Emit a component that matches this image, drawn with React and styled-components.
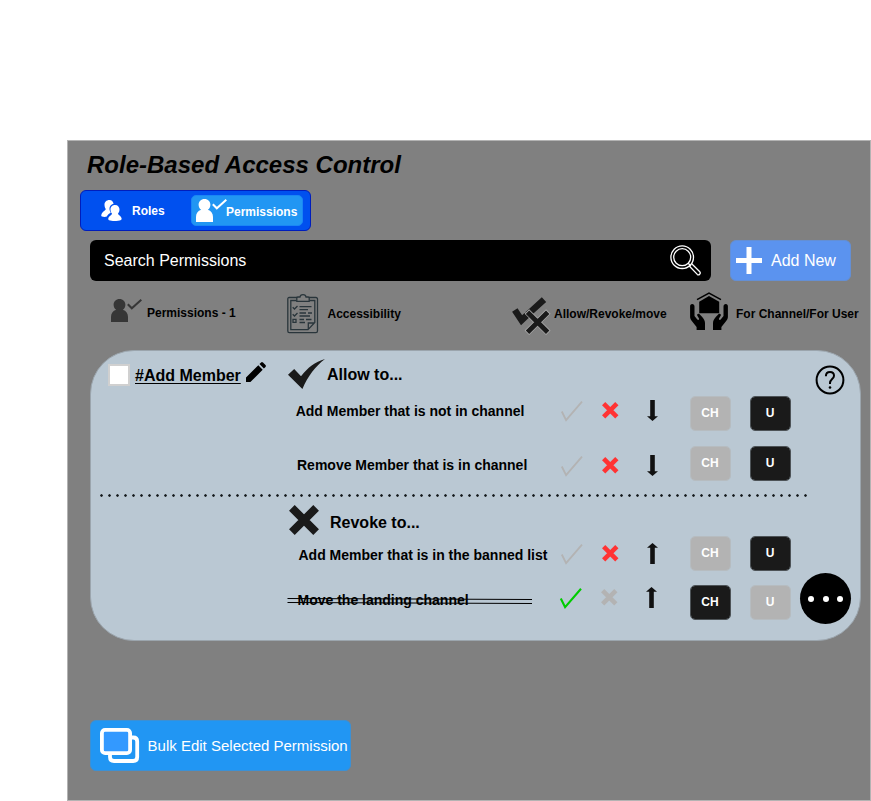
import React from "react";
import styled, { createGlobalStyle } from "styled-components";

const GlobalStyle = createGlobalStyle`
  * { box-sizing: border-box; }
  body { margin: 0; background: #fff; overflow: hidden; }
  svg { display: block; flex: none; overflow: visible; }
`;

const Page = styled.div`
  width: 871px;
  height: 801px;
  padding: 140px 0 0 67px;
  font-family: "Liberation Sans", Arial, sans-serif;
  color: #000;
`;

const Panel = styled.main`
  width: 804px;
  height: 661px;
  background: #808080;
  border: 1px solid #b3b3b3;
  display: flex;
  flex-direction: column;
`;

const Title = styled.h1`
  margin: 10px 0 0 19px;
  height: 39px;
  font-size: 24px;
  line-height: 27px;
  font-weight: bold;
  font-style: italic;
  white-space: nowrap;
`;

const Tabs = styled.nav`
  display: flex;
  margin-left: 12px;
  width: 231px;
  height: 41px;
  background: #0050ef;
  border: 1px solid #001dbc;
  border-radius: 6px;
`;

const Tab = styled.button`
  display: flex;
  align-items: flex-start;
  border: ${(p) => (p.$active ? "1px solid #1a86f5" : "0")};
  border-radius: 5px;
  padding: 0;
  margin: ${(p) => (p.$active ? "4px 0 0" : "4px 0 0 20px")};
  width: ${(p) => (p.$active ? 112 : 90)}px;
  height: 31px;
  background: ${(p) => (p.$active ? "#2196f3" : "transparent")};
  color: #fff;
  font: bold 12px/16px "Liberation Sans", Arial, sans-serif;
  & > svg { margin: ${(p) => (p.$active ? "3px 0 0 4px" : "5px 0 0")}; }
  & > span { margin: ${(p) => (p.$active ? "8px 0 0 -1px" : "8px 0 0 10px")}; }
`;

const Toolbar = styled.div`
  display: flex;
  justify-content: space-between;
  width: 761px;
  margin: 9px 0 0 22px;
`;

const SearchField = styled.div`
  display: flex;
  align-items: center;
  justify-content: space-between;
  width: 621px;
  height: 41px;
  padding: 0 10px 0 14px;
  background: #000;
  border-radius: 6px;
  color: #fff;
  font-size: 16px;
`;

const AddButton = styled.button`
  display: flex;
  align-items: center;
  width: 121px;
  height: 41px;
  padding: 0 0 0 5px;
  gap: 9px;
  border: 1px solid #648fd4;
  border-radius: 6px;
  background: #5b93ef;
  color: #fff;
  font: 16px "Liberation Sans", Arial, sans-serif;
`;

const ColumnHeads = styled.div`
  display: grid;
  grid-template-columns: 177px 225px 178px 1fr;
  height: 69px;
  padding: 11px 0 0 42px;
`;

const ColumnHead = styled.div`
  display: flex;
  align-items: flex-start;
  font-size: 12px;
  font-weight: bold;
  line-height: 16px;
  white-space: nowrap;
  & > svg { margin: ${(p) => p.$iconTop}px 0 0 ${(p) => p.$iconLeft || 0}px; }
  & > span { margin: ${(p) => p.$textTop}px 0 0 ${(p) => p.$gap}px; }
`;

const Card = styled.section`
  width: 771px;
  height: 291px;
  margin-left: 22px;
  background: #bac8d3;
  border: 1px solid #9ba5ad;
  border-radius: 44px;
  display: flex;
  flex-direction: column;
`;

const SectionHead = styled.header`
  display: grid;
  grid-template-columns: 196px 528px 30px;
  height: ${(p) => p.$height}px;
  font-size: 16px;
  font-weight: bold;
  line-height: 18px;
`;

const MemberName = styled.div`
  display: flex;
  padding: 12px 0 0 17px;
  & > svg { margin: -1px 0 0 5px; }
`;

const Checkbox = styled.span`
  width: 22px;
  height: 22px;
  margin-top: 0.5px;
  background: #fff;
  border: 2px solid #d0d0d0;
`;

const Name = styled.span`
  margin: 4px 0 0 5px;
  text-decoration: underline;
  text-decoration-thickness: 1px;
  text-underline-offset: 2px;
  white-space: nowrap;
`;

const SectionTitle = styled.div`
  grid-column: 2;
  display: flex;
  & > svg { margin: ${(p) => p.$iconTop}px 0 0 ${(p) => p.$iconLeft}px; }
  & > span { margin: ${(p) => p.$textTop}px 0 0 ${(p) => p.$gap}px; }
`;

const HelpButton = styled.div`
  margin: 13.5px 0 0;
`;

const PermissionRow = styled.div`
  display: grid;
  grid-template-columns: 265px 41px 45px 44px 60px 50px 50px;
  height: ${(p) => p.$height}px;
  margin-left: 204px;
  align-items: start;
`;

const PermissionLabel = styled.div`
  position: relative;
  margin-top: ${(p) => p.$top}px;
  padding-left: ${(p) => p.$left}px;
  font-size: 14px;
  font-weight: bold;
  line-height: 16px;
  white-space: nowrap;
`;

const StrikeLines = styled.svg`
  position: absolute;
  left: -8px;
  top: 5px;
`;

const Mark = styled.div`
  margin: ${(p) => p.$top}px 0 0 ${(p) => p.$left || 0}px;
`;

const Chip = styled.button`
  width: 41px;
  height: 35px;
  padding: 0 1px 2px 0;
  border: 1px solid ${(p) => (p.$on ? "#4d5357" : "#b6bcc0")};
  border-radius: 5px;
  background: ${(p) => (p.$on ? "#1a1a1a" : "#b3b3b3")};
  background-clip: padding-box;
  color: #fff;
  font: bold 12px "Liberation Sans", Arial, sans-serif;
`;

const MoreButton = styled.button`
  width: 51px;
  height: 51px;
  margin-top: -12.5px;
  padding: 1px 0 0;
  border: 0;
  border-radius: 50%;
  background: #000;
  display: flex;
  align-items: center;
  justify-content: center;
  gap: 8.5px;
`;

const Dot = styled.i`
  width: 6px;
  height: 6px;
  border-radius: 50%;
  background: #fff;
`;

const Divider = styled.div`
  width: 710px;
  height: 4px;
  margin-left: 8px;
  background: radial-gradient(circle at 2.5px 2.5px, #14181a 0.9px, transparent 1.6px) 0 0 / 8px 4px repeat-x;
`;

const BulkButton = styled.button`
  display: flex;
  align-items: center;
  width: 261px;
  height: 51px;
  margin: 79px 0 0 22px;
  padding: 0 0 0 9px;
  gap: 8.6px;
  border: 1px solid #3c90d4;
  border-radius: 6px;
  background: #2196f3;
  color: #fff;
  font: 15px "Liberation Sans", Arial, sans-serif;
  white-space: nowrap;
`;

const RolesIcon = () => (
  <svg width="21" height="21" viewBox="0 0 21 21" fill="#fff">
    <path d="M8.5 0C5.3 0 3.3 2.2 3.5 5C3.6 6.9 4 8 4.8 9C4.6 10.6 2 11.2.6 14C0 15.4.2 16.2 1 16.5C2.9 17.2 4.6 17 5.8 16.5C6.8 14.5 8 13.8 9.4 13.1C9.9 12.7 9.5 12.1 9 11.3C7.8 8.3 8.7 4.8 12.6 3.8C12 1.5 10.8 0 8.5 0Z" />
    <path d="M14 5C11 5 9.3 7.2 9.5 9.9C9.6 11.5 10.2 12.6 11 13.6C11.1 15 8.3 15.8 7.4 18.1C7.1 19.1 7.2 19.9 8 20.3C11.2 21.4 17 21.3 20 20C20.8 19.6 20.8 18.8 20.4 17.8C19.4 15.5 17 15 17 13.6C17.8 12.7 18.4 11.4 18.5 9.8C18.6 7.1 17 5 14 5Z" />
  </svg>
);

const UserCheckIcon = ({ color }) => (
  <svg width="31" height="23" viewBox="0 0 31 23" fill={color}>
    <path d="M8.5 0C5 0 2.6 2.5 2.6 5.7C2.6 7.9 3.6 9.8 5.2 10.8C1.8 11.9 0 14.6 0 18V23H17V18C17 14.6 15.2 11.9 11.8 10.8C13.4 9.8 14.4 7.9 14.4 5.7C14.4 2.5 12 0 8.5 0Z" />
    <path d="M16.8 5.2L20.8 9.3L30.3.7" fill="none" stroke={color} strokeWidth="2" />
  </svg>
);

const SearchIcon = () => (
  <svg width="31" height="31" viewBox="0 0 31 31" fill="none" stroke="#fff" strokeWidth="1.3">
    <circle cx="12.2" cy="12.2" r="11.3" />
    <circle cx="12.2" cy="12.2" r="8.5" />
    <path d="M19 20.8L27.3 29.4Q28.5 30.5 29.7 29.3Q31 28 29.8 26.7L21.2 18.3M18.2 18.2L21 21" />
  </svg>
);

const PlusIcon = () => (
  <svg width="26" height="27" viewBox="0 0 26 27">
    <path d="M13 0V27M0 13.5H26" stroke="#fff" strokeWidth="5" />
  </svg>
);

const ClipboardIcon = () => (
  <svg width="32" height="40" viewBox="0 0 32 40" fill="none" stroke="#29353b" strokeWidth="1.3">
    <path d="M10 3.5H2.2Q.8 3.5.8 5V37Q.8 38.6 2.3 38.6H28.8Q30.5 38.6 30.5 37V5Q30.5 3.5 28.9 3.5H22" />
    <path d="M9.5 6.5H3.8V35.6H21L27.8 28.5V6.5H22.5M21.3 35.3V29H27.6" />
    <path d="M9.8 7.3V3.7Q10 3 11 3H13Q13.2.7 16 .7Q18.8.7 19 3H21Q22 3 22.2 3.7V7.3Z" />
    <path d="M5.7 13.3L7.5 15L10.5 12M5.7 20.3L7.5 22L10.5 19M6 25.3H9V28.4H6ZM12.5 12.7H24.5M12.5 15.7H21M12.5 19H19M21 19H25M12.5 22H23M12.5 25.5H17M19 25.5H24.5M12.5 28.5H18" />
  </svg>
);

const CheckCrossIcon = () => (
  <svg width="38" height="38" viewBox="0 0 38 38" fill="none">
    <path d="M2.8 13L9.6 23.2L17.8 15.5L32 2.7" stroke="#1a1a1a" strokeWidth="6.5" />
    <path d="M12 15L16.5 18" stroke="#8a8a8a" strokeWidth="1" />
    <path d="M14.9 14.6L36.3 35.8M36.3 14.6L14.9 35.8" stroke="#aaa" strokeWidth="6.4" />
    <path d="M15.5 15.2L35.7 35.2M35.7 15.2L15.5 35.2" stroke="#1a1a1a" strokeWidth="4.8" />
  </svg>
);

const HandsHouseIcon = () => (
  <svg width="38" height="38" viewBox="0 0 38 38" fill="#000">
    <path d="M9.2 9.8L19 4L29.2 9.8V21.3H9.2Z" />
    <path d="M7 7.6L19 1.1L31 7.6" fill="none" stroke="#000" strokeWidth="1.5" />
    <path d="M2.2 12C.8 12 0 13 .1 14.5V25C.1 27 1.2 28.2 2.2 29.6L6.6 35V38H15V31C15 28.5 13.7 26.5 12 24.7L9.6 22.2C8.5 21.1 6.7 22 7.2 23.6L9 26.6C9.5 27.8 8.1 28.5 7.3 27.5L4.5 23.9V14.4C4.5 13 3.6 12 2.2 12Z" />
    <path d="M35.8 12C37.2 12 38 13 37.9 14.5V25C37.9 27 36.8 28.2 35.8 29.6L31.4 35V38H23V31C23 28.5 24.3 26.5 26 24.7L28.4 22.2C29.5 21.1 31.3 22 30.8 23.6L29 26.6C28.5 27.8 29.9 28.5 30.7 27.5L33.5 23.9V14.4C33.5 13 34.4 12 35.8 12Z" />
  </svg>
);

const PencilIcon = () => (
  <svg width="20" height="20" viewBox="0 0 20 20">
    <path d="M0 15.6L12.3 3.3L16.7 7.7L4.4 20H0ZM13.5 2.1L15.1.5Q16-.3 17 .6L19.5 3.1Q20.3 4 19.5 4.9L17.9 6.5Z" />
  </svg>
);

const BigCheckIcon = () => (
  <svg width="37" height="30" viewBox="0 0 37 30" fill="#1a1a1a">
    <path d="M0 15.7L6.2 10L13 17.2C19.5 9 27 2.6 37 0C27.5 7.3 20 17 14.4 30Z" />
  </svg>
);

const CrossIcon = ({ size, color, stroke }) => (
  <svg width={size} height={size} viewBox={`0 0 ${size} ${size}`}>
    <path
      d={`M${stroke * 0.36} ${stroke * 0.36}L${size - stroke * 0.36} ${size - stroke * 0.36}M${size - stroke * 0.36} ${stroke * 0.36}L${stroke * 0.36} ${size - stroke * 0.36}`}
      stroke={color}
      strokeWidth={stroke}
    />
  </svg>
);

const HelpIcon = () => (
  <svg width="30" height="30" viewBox="0 0 30 30" fill="none" stroke="#000">
    <circle cx="15" cy="15" r="13.4" strokeWidth="2" />
    <path d="M10.9 11.2C10.9 8.5 12.5 7 15 7C17.4 7 19 8.6 19 10.7C19 13.9 15 14.2 15 18V19" strokeWidth="2" />
    <circle cx="15" cy="22.5" r="1.3" fill="#000" stroke="none" />
  </svg>
);

const CheckIcon = ({ on }) => (
  <svg width="22" height="21" viewBox="0 0 22 21" fill="none" stroke={on ? "#00cc00" : "#b3b3b3"}>
    <path d="M.8 10.5L5.1 19.2L21 .7" strokeWidth={on ? 2.1 : 1.8} />
  </svg>
);

const ArrowIcon = ({ up }) => (
  <svg width="11" height="21" viewBox="0 0 11 21" fill="#111">
    <path d={up ? "M5.5 0L11 4.8H7.8V21H3.2V4.8H0Z" : "M3.2 0H7.8V16.2H11L5.5 21L0 16.2H3.2Z"} />
  </svg>
);

const LayersIcon = () => (
  <svg width="39" height="35" viewBox="0 0 39 35" fill="none" stroke="#fff" strokeWidth="3.8">
    <path d="M31 9.5H33.2Q37.2 9.5 37.2 13.5V29Q37.2 33 33.2 33H14Q10 33 10 29V27" />
    <rect x="1.9" y="1.9" width="28.2" height="23.3" rx="3.2" fill="#3399ff" />
  </svg>
);

const rows = {
  allow: [
    { label: "Add Member that is not in channel", height: 50, left: 0.7, text: 7, check: 5, cross: 6, arrow: 4, allowed: false, up: false },
    { label: "Remove Member that is in channel", height: 47, left: 2, text: 11, check: 10, cross: 11, arrow: 9, allowed: false, up: false },
  ],
  revoke: [
    { label: "Add Member that is in the banned list", height: 49, left: 3.5, text: 11, check: 8, cross: 9, arrow: 7, allowed: false, up: true },
    { label: "Move the landing channel", height: 35, left: 2.5, text: 7, check: 3, cross: 4, arrow: 2, allowed: true, up: true, more: true },
  ],
};

const Permission = ({ row }) => (
  <PermissionRow $height={row.height}>
    <PermissionLabel $top={row.text} $left={row.left}>
      {row.label}
      {row.allowed && (
        <StrikeLines width="246" height="8" viewBox="0 0 246 8">
          <path d="M.5 1.5L245 2.5M.5 5.5L245 6.5" stroke="#000" strokeWidth="1" />
        </StrikeLines>
      )}
    </PermissionLabel>
    <Mark $top={row.check} $left={row.allowed ? 0 : 1}><CheckIcon on={row.allowed} /></Mark>
    <Mark $top={row.cross} $left={row.allowed ? 0 : 1}>
      <CrossIcon size={16.5} stroke={4.6} color={row.allowed ? "#b3b3b3" : "#ff3333"} />
    </Mark>
    <Mark $top={row.arrow} $left={row.allowed ? 0 : 1}><ArrowIcon up={row.up} /></Mark>
    <Chip $on={row.allowed}>CH</Chip>
    <Chip $on={!row.allowed}>U</Chip>
    {row.more && (
      <MoreButton aria-label="More"><Dot /><Dot /><Dot /></MoreButton>
    )}
  </PermissionRow>
);

export default function App() {
  return (
    <Page>
      <GlobalStyle />
      <Panel>
        <Title>Role-Based Access Control</Title>
        <Tabs>
          <Tab><RolesIcon /><span>Roles</span></Tab>
          <Tab $active><UserCheckIcon color="#fff" /><span>Permissions</span></Tab>
        </Tabs>
        <Toolbar>
          <SearchField><span>Search Permissions</span><SearchIcon /></SearchField>
          <AddButton><PlusIcon /><span>Add New</span></AddButton>
        </Toolbar>
        <ColumnHeads>
          <ColumnHead $iconTop={7} $iconLeft={1} $textTop={13} $gap={5}>
            <UserCheckIcon color="#363636" /><span>Permissions - 1</span>
          </ColumnHead>
          <ColumnHead $iconTop={2} $textTop={14} $gap={8.5}>
            <ClipboardIcon /><span>Accessibility</span>
          </ColumnHead>
          <ColumnHead $iconTop={5} $textTop={14} $gap={4}>
            <CheckCrossIcon /><span>Allow/Revoke/move</span>
          </ColumnHead>
          <ColumnHead $iconTop={0} $textTop={14} $gap={8}>
            <HandsHouseIcon /><span>For Channel/For User</span>
          </ColumnHead>
        </ColumnHeads>
        <Card>
          <SectionHead $height={45}>
            <MemberName>
              <Checkbox /><Name>#Add Member</Name><PencilIcon />
            </MemberName>
            <SectionTitle $iconTop={8} $iconLeft={1} $textTop={15} $gap={2}>
              <BigCheckIcon /><span>Allow to...</span>
            </SectionTitle>
            <HelpButton><HelpIcon /></HelpButton>
          </SectionHead>
          {rows.allow.map((row) => <Permission key={row.label} row={row} />)}
          <Divider />
          <SectionHead $height={39}>
            <SectionTitle $iconTop={8} $iconLeft={2} $textTop={17} $gap={11}>
              <CrossIcon size={30} stroke={8} color="#1a1a1a" /><span>Revoke to...</span>
            </SectionTitle>
          </SectionHead>
          {rows.revoke.map((row) => <Permission key={row.label} row={row} />)}
        </Card>
        <BulkButton><LayersIcon /><span>Bulk Edit Selected Permission</span></BulkButton>
      </Panel>
    </Page>
  );
}
